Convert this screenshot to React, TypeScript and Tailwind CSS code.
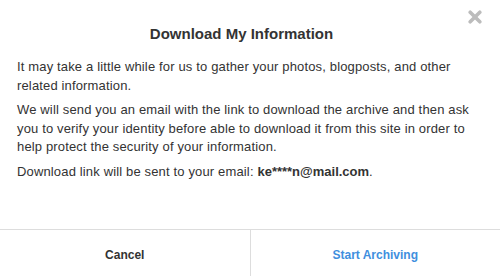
import React from 'react';

const CloseIcon: React.FC = () => (
  <svg width="14" height="14" viewBox="0 0 14 14" aria-hidden="true">
    <path d="M2.2 2.2 L11.8 11.8 M11.8 2.2 L2.2 11.8" stroke="#bcbcbc" strokeWidth="3.6" strokeLinecap="round" />
  </svg>
);

const App: React.FC = () => {
  return (
    <div
      className="relative flex h-[276px] w-[500px] flex-col overflow-hidden bg-white text-[#333]"
      style={{ fontFamily: '"Liberation Sans", Arial, sans-serif' }}
    >
      {/* Close */}
      <button className="absolute right-[18px] top-[10px] flex h-[14px] w-[14px] items-center justify-center">
        <CloseIcon />
      </button>

      {/* Header */}
      <div className="shrink-0 pr-[17px] pt-[24px] text-center">
        <h2 className="text-[15px] font-bold leading-[20px] text-[#333]">Download My Information</h2>
      </div>

      {/* Body */}
      <div className="flex-1 px-[17px] pt-[14px] text-[13px] leading-[18.6px] tracking-[0.15px]">
        <p>It may take a little while for us to gather your photos, blogposts, and other related information.</p>
        <p className="mt-[6px]">
          We will send you an email with the link to download the archive and then ask you to verify your identity
          before able to download it from this site in order to help protect the security of your information.
        </p>
        <p className="mt-[6px]">
          Download link will be sent to your email:{' '}
          <span className="font-bold tracking-normal">ke****n@mail.com</span>.
        </p>
      </div>

      {/* Footer */}
      <div className="mb-[-3px] flex h-[50px] shrink-0 border-t border-[#dddddd]">
        <button className="flex-1 text-[12px] font-bold text-[#333]">Cancel</button>
        <button className="flex-1 border-l border-[#dddddd] text-[12px] font-bold text-[#3f8fde]">
          Start Archiving
        </button>
      </div>
    </div>
  );
};

export default App;
